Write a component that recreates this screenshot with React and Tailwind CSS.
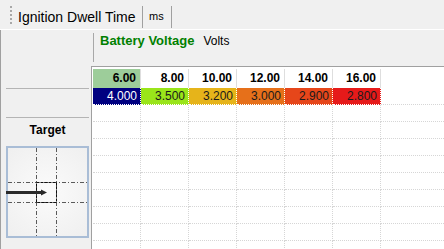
import React from 'react';

const breakpoints = ['6.00', '8.00', '10.00', '12.00', '14.00', '16.00'];

const dwellValues = [
  { value: '4.000', cls: 'bg-[#000080] text-white' },
  { value: '3.500', cls: 'bg-[#9ae51a] text-[#1a1a1a]' },
  { value: '3.200', cls: 'bg-[#e6b41a] text-[#1a1a1a]' },
  { value: '3.000', cls: 'bg-[#e6701a] text-[#1a1a1a]' },
  { value: '2.900', cls: 'bg-[#e6461a] text-[#1a1a1a]' },
  { value: '2.800', cls: 'bg-[#e61a1a] text-[#1a1a1a]' },
];

const emptyRows = [0, 1, 2, 3, 4, 5, 6, 7, 8];

// small crosshair drawing shown under "Target"
const TargetView = () => (
  <div className="relative h-[92px] w-[83px] border-2 border-[#a9bdd6] bg-[radial-gradient(circle,#fbfbfb,#efefef)]">
    <svg width="79" height="88" className="absolute left-0 top-0 overflow-visible">
      <g stroke="#5a5a5a" strokeWidth="1" strokeDasharray="4 2 1 2" fill="none">
        <line x1="28.5" y1="0" x2="28.5" y2="88" />
        <line x1="48.5" y1="0" x2="48.5" y2="88" />
        <line x1="0" y1="34.5" x2="79" y2="34.5" />
        <line x1="0" y1="54.5" x2="79" y2="54.5" />
      </g>
      <rect x="28.5" y="34.5" width="20" height="20" fill="none" stroke="#111" strokeWidth="1" strokeDasharray="3 1" />
      <line x1="-2" y1="44.5" x2="34" y2="44.5" stroke="#2a2a2a" strokeWidth="3" />
      <polygon points="33,41.5 39,44.5 33,47.5" fill="#2a2a2a" />
    </svg>
  </div>
);

export default function App() {
  return (
    <div className="h-[249px] w-[444px] overflow-hidden bg-[#f0f0f0] font-['Liberation_Sans',Arial,sans-serif] text-black">
      {/* toolbar */}
      <div className="flex h-[30px] border-b border-white">
        <div className="ml-[10px] mt-[6px] h-[18px] w-[2px] border-l-2 border-dotted border-[#a8a8a8]" />
        <div className="ml-[6px] w-[124px] pt-[9px] text-[14px] leading-[16px]">Ignition Dwell Time</div>
        <div className="mt-[6px] h-[22px] w-px bg-[#a0a0a0]" />
        <div className="w-[28px] pl-[6px] pt-[10px] text-[11px] leading-[13px]">ms</div>
        <div className="mt-[6px] h-[22px] w-px bg-[#a0a0a0]" />
      </div>

      <div className="flex h-[219px]">
        {/* left panel */}
        <div className="flex w-[91px] shrink-0 flex-col border-l border-[#a0a0a0] pl-[5px]">
          <div className="mt-[58px] h-px w-[83px] bg-[#b4b4b4]" />
          <div className="mt-[28px] h-px w-[83px] bg-[#b4b4b4]" />
          <div className="mt-[5px] w-[83px] text-center text-[12px] font-bold leading-[14px]">Target</div>
          <div className="mt-[9px]">
            <TargetView />
          </div>
        </div>

        {/* table side */}
        <div className="flex flex-1 flex-col">
          <div className="flex h-[36px] pl-[2px]">
            <div className="mt-[3px] h-[29px] w-px bg-[#a8a8a8]" />
            <div className="ml-[6px] flex items-baseline pt-[3px]">
              <span className="text-[13px] font-bold leading-[15px] text-[#008000]">Battery Voltage</span>
              <span className="ml-[9px] text-[12px] leading-[15px]">Volts</span>
            </div>
          </div>

          <div className="flex-1 overflow-hidden border-l border-t border-[#a0a0a0] bg-white pl-px">
            <div className="flex h-[21px] pt-[2px]">
              {breakpoints.map((bp, i) => (
                <div
                  key={bp}
                  className={
                    'w-[48px] shrink-0 border-r border-[#dedede] pr-[4px] text-right text-[12px] font-bold leading-[19px] ' +
                    (i === 0 ? 'bg-[#9dcd9a]' : '')
                  }
                >
                  {bp}
                </div>
              ))}
            </div>

            <div className="flex h-[17px]">
              {dwellValues.map((d) => (
                <div
                  key={d.value}
                  className={'w-[48px] shrink-0 border-b border-r border-dotted border-white pr-[3px] text-right text-[12px] leading-[16px] ' + d.cls}
                >
                  {d.value}
                </div>
              ))}
              <div className="flex-1 border-b border-dotted border-[#d6d6d6]" />
            </div>

            {emptyRows.map((r) => (
              <div key={r} className="flex h-[17px]">
                {breakpoints.map((bp) => (
                  <div key={bp} className="w-[48px] shrink-0 border-b border-r border-dotted border-[#d6d6d6]" />
                ))}
                <div className="flex-1 border-b border-dotted border-[#d6d6d6]" />
              </div>
            ))}
          </div>
        </div>
      </div>
    </div>
  );
}
